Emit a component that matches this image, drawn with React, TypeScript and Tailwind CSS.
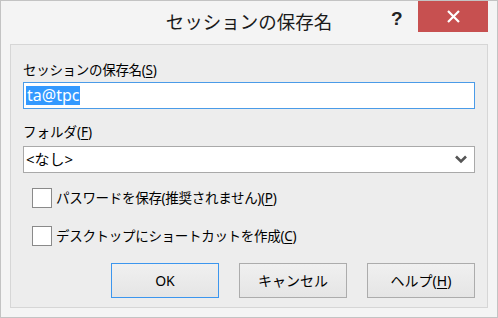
import React from "react";

const jp = { fontFamily: '"Noto Sans", "Noto Sans CJK JP", sans-serif' };

function U({ c }: { c: string }) {
  return <span className="underline underline-offset-2">{c}</span>;
}

function Check({ children }: { children: React.ReactNode }) {
  return (
    <div className="flex items-center h-[20px]">
      <div className="w-[20px] h-[20px] bg-white border border-[#8a8a8a] shrink-0" />
      <span className="ml-[4px] text-[13.5px] leading-[20px] text-black tracking-[-0.3px]">{children}</span>
    </div>
  );
}

function Btn({ children, primary }: { children: React.ReactNode; primary?: boolean }) {
  return (
    <div
      className={
        "w-[108px] h-[35px] flex items-center justify-center text-[14px] text-black bg-gradient-to-b from-[#f0f0f0] to-[#e5e5e5] border " +
        (primary ? "border-[#3c96ee]" : "border-[#acacac]")
      }
    >
      {children}
    </div>
  );
}

export default function App() {
  return (
    <div
      className="w-[498px] h-[318px] bg-[#f4f4f4] border border-[#c3c3c3] flex flex-col overflow-hidden"
      style={jp}
    >
      <div className="relative h-[43px] shrink-0">
        <div className="absolute left-0 right-0 top-[8px] text-center text-[18.5px] leading-[26px] text-[#1a1a1a]">
          セッションの保存名
        </div>
        <div
          className="absolute left-[390px] top-[4px] text-[19px] font-bold text-[#222]"
          style={{ fontFamily: '"Liberation Sans", sans-serif' }}
        >
          ?
        </div>
        <div className="absolute left-[417px] top-0 w-[70px] h-[31px] bg-[#c75050] flex items-center justify-center">
          <svg width="13" height="13" viewBox="0 0 13 13">
            <path d="M1 1 L12 12 M12 1 L1 12" stroke="white" strokeWidth="2.2" />
          </svg>
        </div>
      </div>
      <div className="mx-[9px] mb-[9px] flex-1 bg-[#ededed] border border-[#d6d6d6] px-[12px] pt-[14px] flex flex-col">
        <div className="text-[13.5px] leading-[22px] text-black tracking-[-0.3px]">
          セッションの保存名(<U c="S" />)
        </div>
        <div className="mt-[1px] h-[27px] bg-white border border-[#4a9be8] flex items-center pl-[2px]">
          <span className="bg-[#3399ff] text-white text-[16px] leading-[19px] px-[1px]">ta@tpc</span>
        </div>
        <div className="mt-[12px] text-[13.5px] leading-[22px] text-black">
          フォルダ(<U c="F" />)
        </div>
        <div className="mt-[3px] h-[27px] bg-white border border-[#a9a9a9] flex items-center pl-[2px] pr-[7px] justify-between">
          <span className="text-[15px] text-black">&lt;なし&gt;</span>
          <svg width="12" height="9" viewBox="0 0 12 9">
            <path d="M1 1.5 L6 6.5 L11 1.5" stroke="#555" strokeWidth="2.6" fill="none" />
          </svg>
        </div>
        <div className="mt-[15px] pl-[9px] flex flex-col gap-[18px]">
          <Check>
            パスワードを保存(推奨されません)(<U c="P" />)
          </Check>
          <Check>
            デスクトップにショートカットを作成(<U c="C" />)
          </Check>
        </div>
        <div className="mt-[17px] flex justify-end gap-[20px] pr-[0px]">
          <Btn primary>OK</Btn>
          <Btn>キャンセル</Btn>
          <Btn>
            ヘルプ(<U c="H" />)
          </Btn>
        </div>
      </div>
    </div>
  );
}
